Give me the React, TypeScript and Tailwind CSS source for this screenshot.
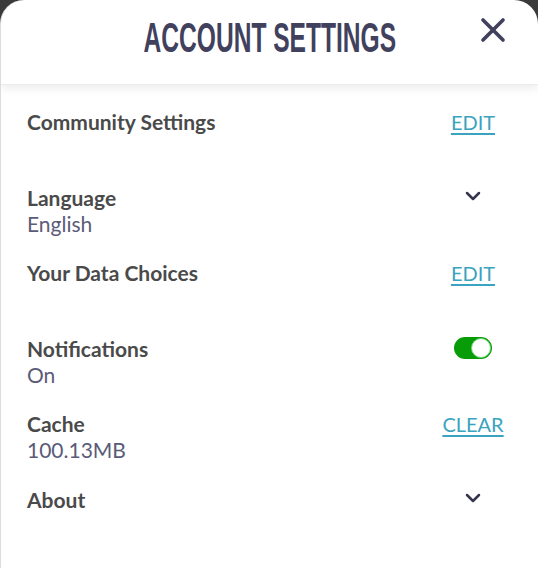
import { ChevronDown, X } from "lucide-react";

const body = { fontFamily: "Lato, 'Open Sans', sans-serif" };

const Row = ({
  label,
  value,
  action,
}: {
  label: string;
  value?: string;
  action: React.ReactNode;
}) => (
  <div className="flex h-[75.6px] items-start">
    <div className="flex-1">
      <div className="text-[21px] leading-[26px] font-bold text-[#4a4a4a]">{label}</div>
      {value && <div className="text-[21px] leading-[26px] text-[#5b5b78]">{value}</div>}
    </div>
    <div className="flex w-[80px] justify-center">{action}</div>
  </div>
);

const Link = ({ children }: { children: React.ReactNode }) => (
  <button className="text-[20px] leading-[26px] text-[#3aa3c0] underline underline-offset-[3px] decoration-[1.5px]">
    {children}
  </button>
);

const Chevron = () => <ChevronDown className="mt-[-1px] h-6 w-6 text-[#35354f]" strokeWidth={2.5} />;

const Toggle = () => (
  <div className="mt-[1px] flex h-[22px] w-[38px] items-center justify-end rounded-full bg-[#089c08] pr-[1px]">
    <div className="h-[20px] w-[20px] rounded-full border border-[#6fd66f] bg-white" />
  </div>
);

export default function App() {
  return (
    <div className="h-[568px] w-[538px] bg-[#3a3a3a]">
      <div className="h-full overflow-hidden rounded-t-[24px] border-l border-[#dcdcdc] bg-white" style={body}>
        <div className="relative flex h-[85px] items-center justify-center border-b border-[#ececec] shadow-[0_4px_8px_rgba(0,0,0,0.07)]">
          <h1
            className="mt-[-8px] scale-x-[0.585] whitespace-nowrap text-[42px] font-bold leading-none text-[#41415e]"
            style={{ fontFamily: "'Liberation Sans', Arial, sans-serif" }}
          >
            ACCOUNT SETTINGS
          </h1>
          <X className="absolute right-[25px] top-[10px] h-10 w-10 text-[#41415e]" strokeWidth={2.2} />
        </div>
        <div className="pl-[26px] pr-[25px] pt-[24px]">
          <Row label="Community Settings" action={<Link>EDIT</Link>} />
          <Row label="Language" value="English" action={<Chevron />} />
          <Row label="Your Data Choices" action={<Link>EDIT</Link>} />
          <Row label="Notifications" value="On" action={<Toggle />} />
          <Row label="Cache" value="100.13MB" action={<Link>CLEAR</Link>} />
          <Row label="About" action={<Chevron />} />
        </div>
      </div>
    </div>
  );
}
